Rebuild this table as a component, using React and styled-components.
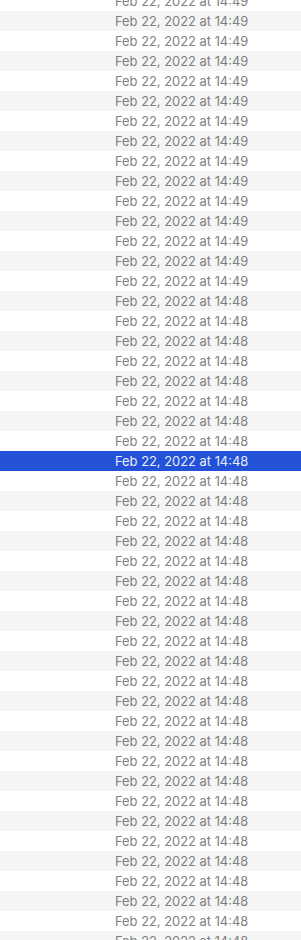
import React from "react";
import styled, { createGlobalStyle } from "styled-components";

const GlobalStyle = createGlobalStyle`
  html, body {
    margin: 0;
    padding: 0;
    background: #ffffff;
    overflow: hidden;
  }
`;

const rows = Array.from({ length: 48 }, (_, i) => ({
  id: i,
  time: i < 15 ? "14:49" : "14:48",
}));

const SELECTED = 23;

const App = () => {
  return (
    <>
      <GlobalStyle />
      <List>
        {rows.map((row) => (
          <Row key={row.id} $odd={row.id % 2 === 1} $selected={row.id === SELECTED}>
            <DateCell $selected={row.id === SELECTED}>
              Feb 22, 2022 at {row.time}
            </DateCell>
          </Row>
        ))}
      </List>
    </>
  );
};

const List = styled.div`
  width: 301px;
  height: 949px;
  margin-top: -9px;
  display: flex;
  flex-direction: column;
`;

const Row = styled.div`
  height: 20px;
  flex-shrink: 0;
  display: flex;
  align-items: center;
  padding-left: 115px;
  background: ${(p) =>
    p.$selected ? "#2452d7" : p.$odd ? "#f4f5f5" : "#ffffff"};
`;

const DateCell = styled.span`
  font-family: Inter, "Liberation Sans", sans-serif;
  font-size: 12.9px;
  color: ${(p) => (p.$selected ? "#e8ecfa" : "#7f7f7f")};
  white-space: nowrap;
`;

export default App;
